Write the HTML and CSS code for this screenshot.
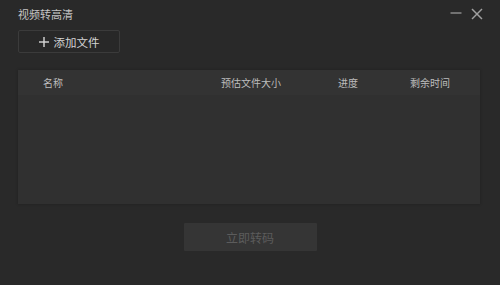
FILE: index.html
```html
<!DOCTYPE html>
<html lang="zh">
<head>
<meta charset="utf-8">
<link rel="stylesheet" href="styles.css">
</head>
<body>
<div class="window">
  <div class="titlebar">
    <span class="title">视频转高清</span>
    <div class="controls">
      <svg class="icon" width="12" height="12" viewBox="0 0 12 12"><line x1="0.5" y1="5" x2="11.5" y2="5" stroke="#9a9a9a" stroke-width="1.3"/></svg>
      <svg class="icon" width="12" height="12" viewBox="0 0 12 12"><line x1="1" y1="1" x2="11" y2="11" stroke="#a0a0a0" stroke-width="1.5"/><line x1="11" y1="1" x2="1" y2="11" stroke="#a0a0a0" stroke-width="1.5"/></svg>
    </div>
  </div>
  <div class="toolbar">
    <button class="add-btn">
      <svg width="10" height="10" viewBox="0 0 10 10"><line x1="5" y1="0" x2="5" y2="10" stroke="#d8d8d8" stroke-width="1.4"/><line x1="0" y1="5" x2="10" y2="5" stroke="#d8d8d8" stroke-width="1.4"/></svg>
      <span>添加文件</span>
    </button>
  </div>
  <div class="table">
    <div class="thead">
      <span class="col-name">名称</span>
      <span class="col-size">预估文件大小</span>
      <span class="col-progress">进度</span>
      <span class="col-time">剩余时间</span>
    </div>
    <div class="tbody"></div>
  </div>
  <div class="footer">
    <button class="start-btn">立即转码</button>
  </div>
</div>
</body>
</html>
```

FILE: styles.css
```css
html, body {
  margin: 0;
  padding: 0;
  background: #292929;
  width: 500px;
  height: 285px;
  overflow: hidden;
  font-family: "Noto Sans CJK SC", "Noto Sans", sans-serif;
}
.window {
  display: flex;
  flex-direction: column;
}
.titlebar {
  height: 28px;
  display: flex;
  align-items: center;
  justify-content: space-between;
  padding: 0 17px 0 18px;
}
.title {
  font-size: 11px;
  color: #c4c4c4;
  line-height: 1;
}
.controls {
  display: flex;
  align-items: center;
  gap: 9px;
}
.icon {
  display: block;
}
.toolbar {
  padding: 2px 0 0 18px;
  display: flex;
}
.add-btn {
  width: 102px;
  height: 23px;
  background: #282828;
  border: 1px solid #3b3b3b;
  border-radius: 2px;
  display: flex;
  align-items: center;
  justify-content: center;
  gap: 5px;
  padding: 0;
  color: #d4d4d4;
  font-family: inherit;
  font-size: 11.5px;
}
.add-btn svg {
  display: block;
}
.table {
  margin: 17px 20px 0 18px;
  display: flex;
  flex-direction: column;
  box-shadow: 0 0 3px rgba(0,0,0,0.25);
}
.thead {
  height: 25px;
  background: #333333;
  display: flex;
  align-items: center;
  font-size: 10px;
  color: #bdbdbd;
  position: relative;
}
.thead span {
  line-height: 1;
}
.col-name { margin-left: 25px; width: 178px; }
.col-size { width: 117px; }
.col-progress { width: 72px; }
.col-time { }
.tbody {
  height: 109px;
  background: #303030;
}
.footer {
  display: flex;
  justify-content: center;
  padding-top: 19px;
}
.start-btn {
  width: 133px;
  height: 28px;
  background: #353535;
  border: none;
  border-radius: 1px;
  color: #5c5c5c;
  font-family: inherit;
  font-size: 12px;
  padding: 0;
}
```
